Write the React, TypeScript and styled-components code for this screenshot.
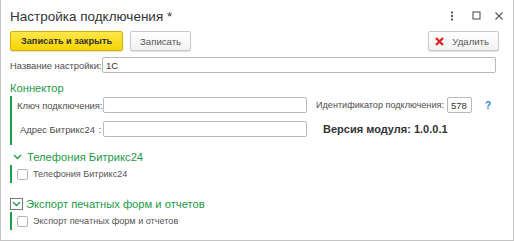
import React from "react";
import styled, { createGlobalStyle } from "styled-components";

const Global = createGlobalStyle`
  html, body { margin: 0; padding: 0; background: #fff; }
  body { font-family: "Liberation Sans", Arial, sans-serif; }
  * { box-sizing: border-box; }
`;

const Window = styled.div`
  width: 514px;
  height: 241px;
  border: 1px solid #c4c4c4;
  border-top: none;
  background: #fff;
  padding: 0 0 0 9px;
  display: flex;
  flex-direction: column;
  overflow: hidden;
`;

const TitleBar = styled.div`
  height: 31px;
  display: flex;
  align-items: center;
  padding-right: 10px;
`;

const Title = styled.div`
  font-size: 13.5px;
  color: #333;
  flex: 1;
  padding-top: 1px;
`;

const WinIcons = styled.div`
  display: flex;
  align-items: center;
  gap: 14px;
`;

const Toolbar = styled.div`
  display: flex;
  gap: 7px;
  padding-right: 14px;
  align-items: center;
`;

const Button = styled.button<{ $primary?: boolean }>`
  height: 20px;
  padding: 0 ${(p) => (p.$primary ? "10px" : "9px")};
  font-family: inherit;
  font-size: ${(p) => (p.$primary ? "9.2px" : "9.6px")};
  font-weight: ${(p) => (p.$primary ? "bold" : "normal")};
  color: ${(p) => (p.$primary ? "#333" : "#555")};
  border-radius: 2px;
  border: 1px solid ${(p) => (p.$primary ? "#d0b000" : "#c8c8c8")};
  background: ${(p) =>
    p.$primary
      ? "linear-gradient(#ffe74a, #f6d400)"
      : "linear-gradient(#ffffff, #f2f2f2)"};
  box-shadow: 0 1px 1px rgba(0, 0, 0, 0.12);
  display: flex;
  align-items: center;
  gap: 8px;
`;

const DeleteButton = styled(Button)`
  margin-left: auto;
  padding: 0 9px 0 6px;
`;

const Row = styled.div<{ $top?: number }>`
  display: flex;
  align-items: center;
  margin-top: ${(p) => p.$top ?? 0}px;
`;

const Label = styled.label<{ $width?: number; $size?: number }>`
  font-size: ${(p) => p.$size ?? 9.4}px;
  color: #4d4d4d;
  white-space: nowrap;
  ${(p) => (p.$width ? `width: ${p.$width}px;` : "")}
`;

const Input = styled.div<{ $width?: number; $grow?: boolean }>`
  height: 16px;
  border: 1px solid #b9b9b9;
  border-radius: 2px;
  font-size: 9.6px;
  color: #333;
  padding: 0 3px;
  display: flex;
  align-items: center;
  ${(p) => (p.$width ? `width: ${p.$width}px;` : "")}
  ${(p) => (p.$grow ? "flex: 1;" : "")}
`;

const GroupTitle = styled.div<{ $top?: number }>`
  font-size: 11.2px;
  line-height: 16px;
  color: #1a9a45;
  display: flex;
  align-items: center;
  gap: 3px;
  margin-top: ${(p) => p.$top ?? 0}px;
`;

const GroupBody = styled.div`
  border-left: 2px solid #1aa04a;
  display: flex;
  flex-direction: column;
`;

const ConnGrid = styled.div`
  display: grid;
  grid-template-columns: 86px 204px auto;
  row-gap: 8px;
  align-items: center;
  padding: 1px 0 8px 5px;
`;

const KeyLabel = styled(Label)`
  display: flex;
  justify-content: space-between;
  padding-right: 2px;
`;

const Right = styled.div`
  display: flex;
  align-items: center;
  margin-left: 9px;
`;

const SmallInput = styled(Input)`
  margin-left: 3px;
`;

const Help = styled.span`
  color: #2a7fd4;
  font-size: 10px;
  font-weight: bold;
  margin-left: 13px;
`;

const Version = styled.div`
  font-size: 11px;
  font-weight: bold;
  color: #333;
  margin-left: 16px;
`;

const CheckRow = styled.div`
  display: flex;
  align-items: center;
  gap: 5px;
  padding-left: 5px;
  height: 18px;
`;

const Box = styled.span`
  width: 11px;
  height: 11px;
  border: 1px solid #b5b5b5;
  border-radius: 2px;
  background: #fff;
  display: inline-block;
`;

const CheckText = styled.span`
  font-size: 9.1px;
  color: #555;
`;

const ChevronBox = styled.span<{ $framed?: boolean }>`
  width: 13px;
  height: 12px;
  display: inline-flex;
  align-items: center;
  justify-content: center;
  border: 1px solid ${(p) => (p.$framed ? "#7a7a7a" : "transparent")};
  margin-left: ${(p) => (p.$framed ? "0" : "1px")};
`;

const Chevron = () => (
  <svg width="9" height="6" viewBox="0 0 9 6">
    <path d="M1 1 L4.5 4.5 L8 1" fill="none" stroke="#1a9a45" strokeWidth="1.3" />
  </svg>
);

export default function App() {
  return (
    <>
      <Global />
      <Window>
        <TitleBar>
          <Title>Настройка подключения *</Title>
          <WinIcons>
            <svg width="4" height="10" viewBox="0 0 4 10">
              <rect x="1" y="0.5" width="2" height="2" fill="#555" />
              <rect x="1" y="4" width="2" height="2" fill="#555" />
              <rect x="1" y="7.5" width="2" height="2" fill="#555" />
            </svg>
            <svg width="9" height="9" viewBox="0 0 9 9" style={{ marginLeft: 4 }}>
              <rect x="1" y="1" width="7" height="7" fill="none" stroke="#555" strokeWidth="1.1" />
            </svg>
            <svg width="8" height="8" viewBox="0 0 8 8">
              <path d="M0.5 0.5 L7.5 7.5 M7.5 0.5 L0.5 7.5" stroke="#555" strokeWidth="1.1" />
            </svg>
          </WinIcons>
        </TitleBar>
        <Toolbar>
          <Button $primary>Записать и закрыть</Button>
          <Button>Записать</Button>
          <DeleteButton>
            <svg width="9" height="9" viewBox="0 0 9 9">
              <path d="M1 1 L8 8 M8 1 L1 8" stroke="#e0242a" strokeWidth="2.4" />
            </svg>
            Удалить
          </DeleteButton>
        </Toolbar>
        <Row $top={6} style={{ paddingRight: 17 }}>
          <Label $width={92}>Название настройки:</Label>
          <Input $grow>1C</Input>
        </Row>
        <GroupTitle $top={7}>Коннектор</GroupTitle>
        <GroupBody>
          <ConnGrid>
            <KeyLabel>Ключ подключения:</KeyLabel>
            <Input $width={204} />
            <Right>
              <Label $size={9.1}>Идентификатор подключения:</Label>
              <SmallInput $width={25}>578</SmallInput>
              <Help>?</Help>
            </Right>
            <KeyLabel style={{ paddingLeft: 3 }}>
              <span>Адрес Битрикс24</span>
              <span>:</span>
            </KeyLabel>
            <Input $width={204} />
            <Version>Версия модуля: 1.0.0.1</Version>
          </ConnGrid>
        </GroupBody>
        <GroupTitle $top={4}>
          <ChevronBox>
            <Chevron />
          </ChevronBox>
          Телефония Битрикс24
        </GroupTitle>
        <GroupBody>
          <CheckRow>
            <Box />
            <CheckText>Телефония Битрикс24</CheckText>
          </CheckRow>
        </GroupBody>
        <GroupTitle $top={13}>
          <ChevronBox $framed>
            <Chevron />
          </ChevronBox>
          Экспорт печатных форм и отчетов
        </GroupTitle>
        <GroupBody>
          <CheckRow>
            <Box />
            <CheckText>Экспорт печатных форм и отчетов</CheckText>
          </CheckRow>
        </GroupBody>
      </Window>
    </>
  );
}
